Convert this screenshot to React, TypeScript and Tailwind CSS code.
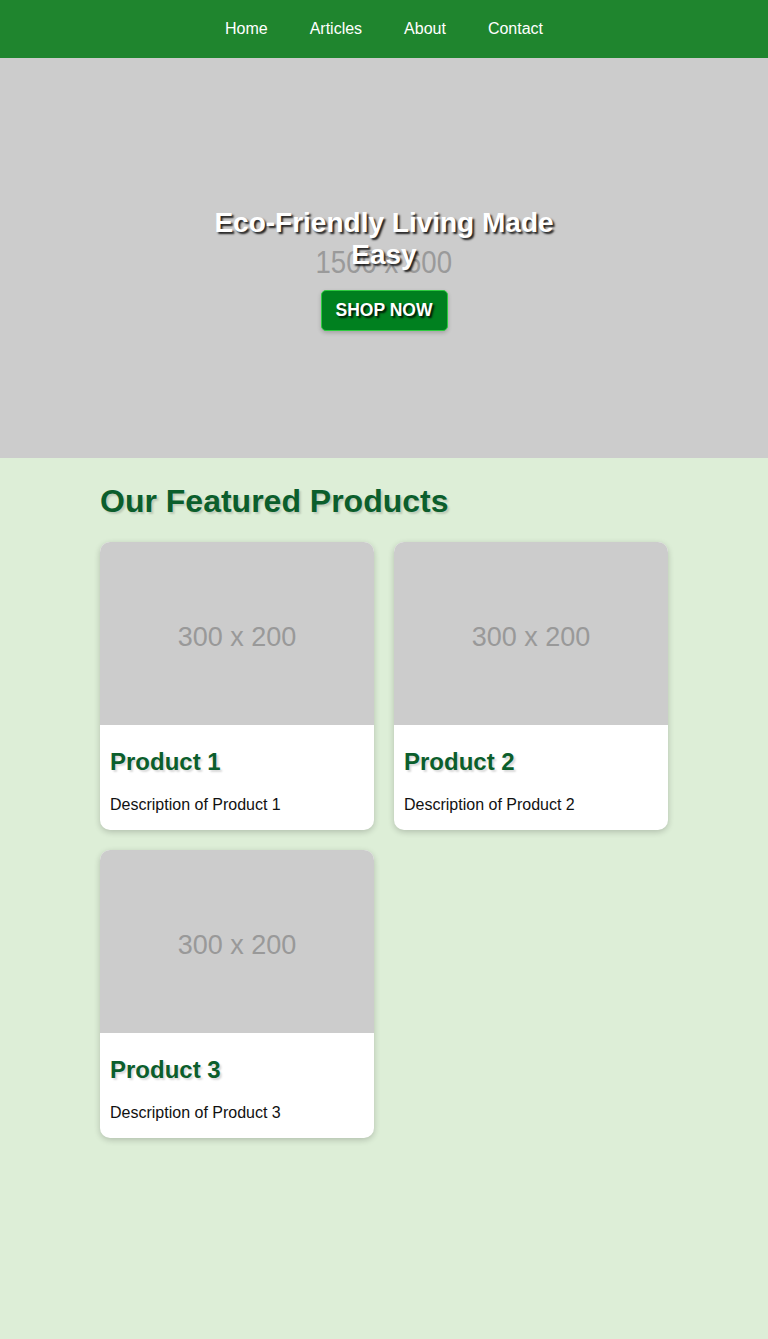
import React from 'react';

const links = ['Home', 'Articles', 'About', 'Contact'];

const products = [
    { name: 'Product 1', description: 'Description of Product 1' },
    { name: 'Product 2', description: 'Description of Product 2' },
    { name: 'Product 3', description: 'Description of Product 3' },
];

const ProductCard: React.FC<{ name: string; description: string }> = ({ name, description }) => (
    <div className="bg-white rounded-[10px] overflow-hidden shadow-[0_2px_6px_rgba(0,0,0,0.2)]">
        <div className="h-[183px] bg-[#cccccc] flex items-center justify-center pt-[7px]">
            <span className="text-[27px] text-[#999999] leading-none">300 x 200</span>
        </div>
        <div className="px-[10px] pt-[23px] pb-[16px]">
            <h3 className="text-[24px] leading-[28px] font-bold text-[#0b5e2c] [text-shadow:2px_2px_2px_rgba(0,0,0,0.15)]">
                {name}
            </h3>
            <p className="mt-[20px] text-[16px] leading-[18px] text-[#111111]">{description}</p>
        </div>
    </div>
);

export default function App() {
    return (
        <div className="min-h-screen bg-[#ddeed7] font-['Liberation_Sans',Arial,sans-serif]">
            {/* Top navigation */}
            <nav className="h-[58px] bg-[#1f852e] flex items-center justify-center gap-[42px]">
                {links.map((link) => (
                    <a key={link} href="#" className="text-white text-[16px]">
                        {link}
                    </a>
                ))}
            </nav>

            {/* Hero */}
            <section className="relative h-[400px] bg-[#cccccc] overflow-hidden">
                <div className="absolute inset-0 flex items-center justify-center pt-[8px]">
                    <span className="text-[31px] text-[#9a9a9a] leading-none scale-x-[0.89]">1500 x 600</span>
                </div>
                <div className="relative h-full flex flex-col items-center justify-center text-center pt-[2px]">
                    <h1 className="max-w-[380px] my-[19px] text-[28px] leading-[32px] font-bold text-white [text-shadow:2px_2px_2px_rgba(0,0,0,0.85)]">
                        Eco-Friendly Living Made Easy
                    </h1>
                    <a
                        href="#"
                        className="w-[127px] h-[41px] flex items-center justify-center bg-[#00801f] border border-[#2ecc40] rounded-[5px] text-white text-[17.5px] font-bold uppercase shadow-[0_2px_4px_rgba(0,0,0,0.2)] [text-shadow:2px_2px_2px_rgba(0,0,0,0.85)]"
                    >
                        Shop Now
                    </a>
                </div>
            </section>

            {/* Featured products */}
            <main className="px-[100px] pt-[25px] pb-10">
                <h2 className="text-[32px] leading-[37px] font-bold text-[#0b5e2c] mb-[22px] [text-shadow:2px_2px_2px_rgba(0,0,0,0.15)]">
                    Our Featured Products
                </h2>
                <div className="grid grid-cols-2 gap-5">
                    {products.map((p) => (
                        <ProductCard key={p.name} name={p.name} description={p.description} />
                    ))}
                </div>
            </main>
        </div>
    );
}
